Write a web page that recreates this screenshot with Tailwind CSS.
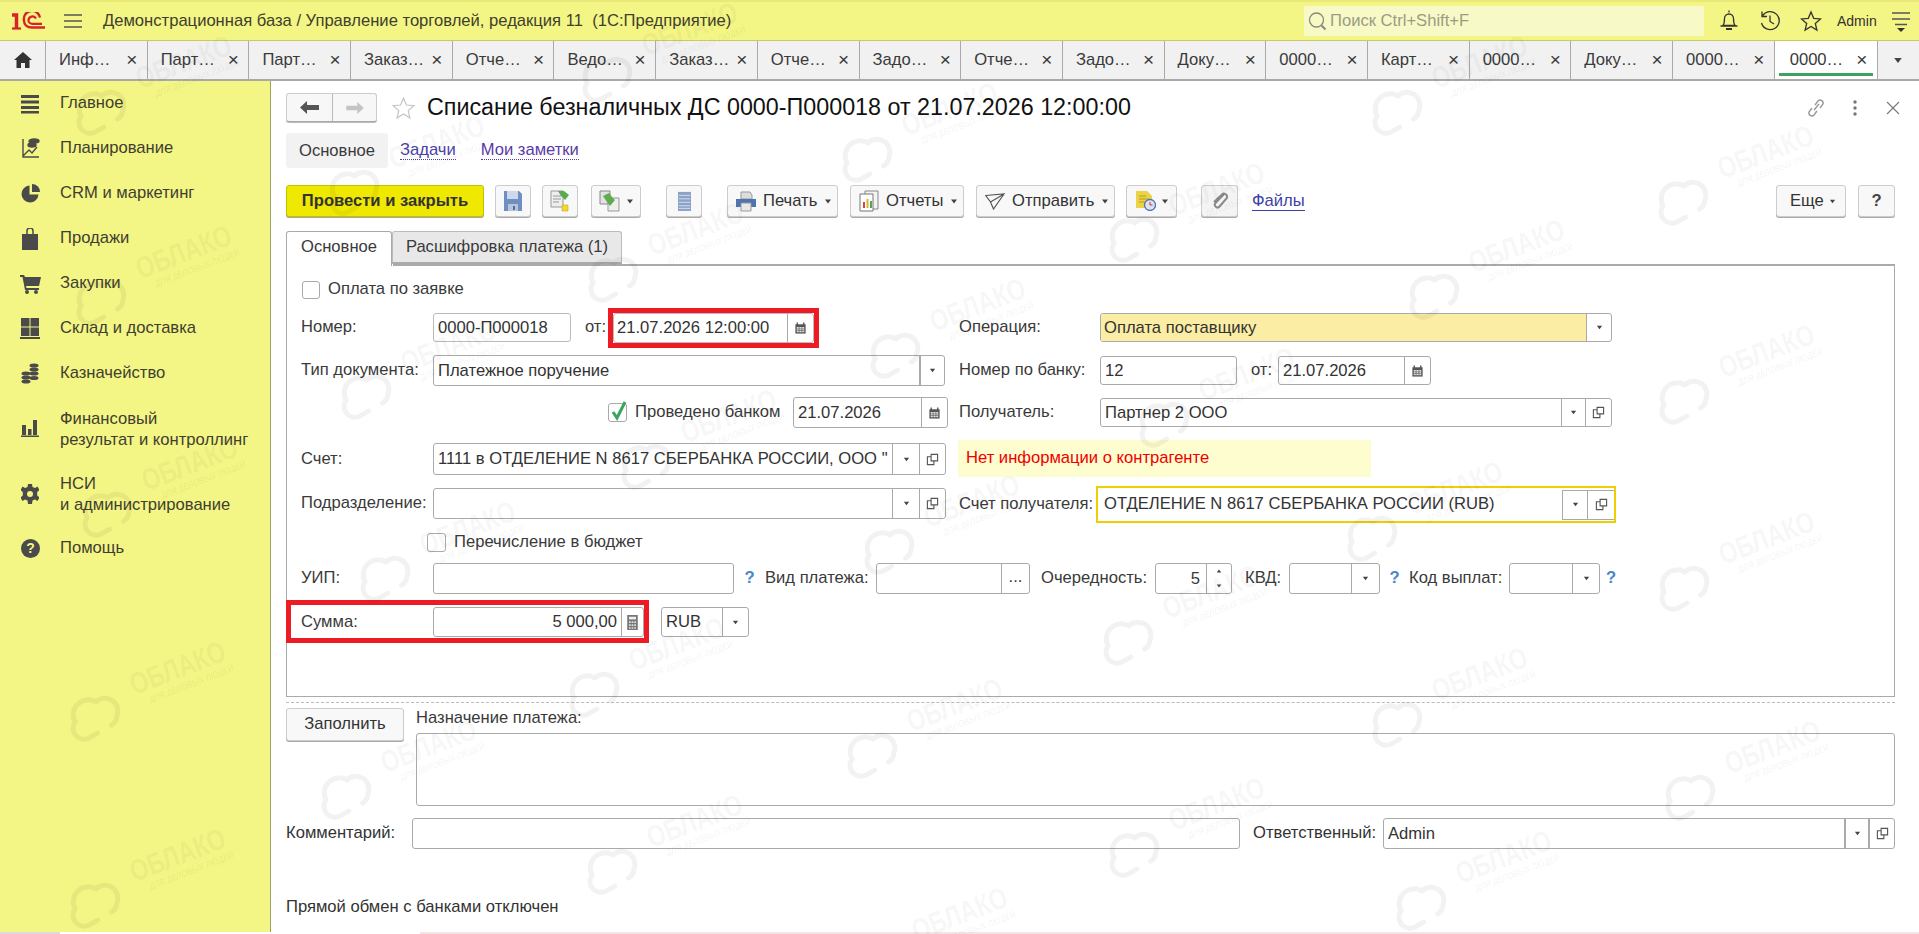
<!DOCTYPE html>
<html lang="ru"><head><meta charset="utf-8"><title>1С</title>
<script src="https://cdn.jsdelivr.net/npm/@tailwindcss/browser@4"></script></head>
<body class="m-0">
<svg width="0" height="0" class="absolute">
<defs>
<symbol id="dd" viewBox="0 0 8 5"><path d="M1 .5h6L4 4.500z" fill="#444"/></symbol>
<symbol id="cp" viewBox="0 0 14 14"><path d="M5.500 1.500h7v7h-7z M5.500 4H1.500v8.500h7V8.500" fill="none" stroke="#555" stroke-width="1.200"/></symbol>
<symbol id="cal" viewBox="0 0 14 14"><path d="M1.500 3h11v10h-11z" fill="#555"/><path d="M3.500 1v3M10.500 1v3" stroke="#555" stroke-width="1.500"/><path d="M3 6h8v5.500H3z" fill="#eee"/><path d="M3 8h8M3 9.800h8M5.500 6v5.500M8.500 6v5.500" stroke="#555" stroke-width=".7"/></symbol>
<g id="wm">
<g transform="rotate(-21)" fill="#000" fill-opacity=".05" font-family="Liberation Sans">
<text x="-50" y="9" font-size="30" font-weight="700" textLength="100" lengthAdjust="spacingAndGlyphs">ОБЛАКО</text>
<text x="-38" y="22" font-size="10" font-weight="700" font-style="italic" textLength="90" lengthAdjust="spacingAndGlyphs">ДЛЯ ДЕЛОВЫХ ЛЮДЕЙ</text>
</g>
<path transform="translate(-85 46) rotate(-30)" d="M-5 18h-9a11 11 0 0 1-5-21a15 15 0 0 1 28-7a13 13 0 0 1 11 23c-2 3-5 5-9 5" fill="none" stroke="#000" stroke-opacity=".05" stroke-width="5" stroke-linecap="round"/>
</g>
</defs>
</svg>

<div class="relative w-[1919px] h-[934px] overflow-hidden bg-white font-['Liberation_Sans',sans-serif] text-[16.600px] text-[#3a3a3a]">

<!-- header -->
<header class="h-[41px] bg-[#f3f585] border-t-[2px] border-t-[#e9e97a] border-b border-b-[#c9c96a] flex items-center">
  <svg class="ml-[11px] w-[35px] h-[18px]" viewBox="0 0 35 18" fill="none" stroke="#d8232a"><path d="M1 3h4.500v13" stroke-width="3.500"/><path d="M1 16.500h9" stroke-width="2.200"/><path d="M29 5.500A7.500 7.500 0 0 0 13 8.500c0 4 3 7 8 7h13" stroke-width="2.400"/><path d="M25 6.500a4 4 0 0 0-7.500 2c0 2 2 3.300 4 3.300H31" stroke-width="2.200"/></svg>
  <svg class="ml-[18px] w-[18px] h-[14px]" viewBox="0 0 18 14" stroke="#555" stroke-width="1.300"><path d="M0 1h18M0 7h18M0 13h18"/></svg>
  <span class="ml-[21px] w-[1201px] whitespace-pre text-[#3f3f2c]">Демонстрационная база / Управление торговлей, редакция 11  (1С:Предприятие)</span>
  <div class="w-[400px] h-[30px] bg-[#f7f9c6] rounded-[2px] flex items-center pl-[4px]">
    <svg class="w-[19px] h-[21px]" viewBox="0 0 19 21" fill="none" stroke="#8a8a78" stroke-width="1.300"><circle cx="8.500" cy="9" r="7"/><path d="M13.500 14.500l4 4" stroke-width="2"/></svg>
    <span class="ml-[3px] text-[#9c9c84]">Поиск Ctrl+Shift+F</span>
  </div>
  <svg class="ml-[15px] w-[20px] h-[24px]" viewBox="0 0 20 24" fill="none" stroke="#333" stroke-width="1.300"><path d="M10 1.500v2M4 16.500c1.500-2 1.500-4 1.500-7a4.500 4.500 0 0 1 9 0c0 3 0 5 1.500 7zM1.500 17h17"/><path d="M7 20h6" stroke-width="2"/></svg>
  <svg class="ml-[20px] w-[22px] h-[24px]" viewBox="0 0 22 24" fill="none" stroke="#333" stroke-width="1.300"><path d="M3.500 7a9 9 0 1 1-1 7M3 2.500v5h5M11 6.500v6l4 2.500"/></svg>
  <svg class="ml-[19px] w-[22px] h-[22px]" viewBox="0 0 22 22" fill="none" stroke="#333" stroke-width="1.300"><path d="M11 2l2.700 6.300 6.800.6-5.200 4.500 1.600 6.700L11 16.500 5.100 20.100l1.600-6.700L1.500 8.900l6.800-.6z"/></svg>
  <span class="ml-[15px] text-[14px] w-[54px] text-[#333]">Admin</span>
  <svg class="w-[20px] h-[22px]" viewBox="0 0 20 22" stroke="#555" stroke-width="1.300"><path d="M1 3h18M1 9h18M4 14.500h12"/><path d="M6 18h8l-4 4z" fill="#333" stroke="none"/></svg>
</header>

<!-- tabs -->
<nav class="h-[40px] bg-[#f1f1f1] border-b-[2px] border-[#a9a9a9] flex">
  <div class="w-[46px] flex items-center justify-center border-r border-[#aaa]"><svg class="w-[18px] h-[16px]" viewBox="0 0 18 16"><path d="M9 0L0 8h2.500v8H7v-5h4v5h4.500V8H18z" fill="#333"/></svg></div>
  <div class="w-[101.700px] flex items-center pl-[13px] pr-[6px] border-r border-[#aaa]"><span class="flex-1">Инф…</span><span class="w-[18px] text-center text-[19px]">×</span></div>
  <div class="w-[101.700px] flex items-center pl-[13px] pr-[6px] border-r border-[#aaa]"><span class="flex-1">Парт…</span><span class="w-[18px] text-center text-[19px]">×</span></div>
  <div class="w-[101.700px] flex items-center pl-[13px] pr-[6px] border-r border-[#aaa]"><span class="flex-1">Парт…</span><span class="w-[18px] text-center text-[19px]">×</span></div>
  <div class="w-[101.700px] flex items-center pl-[13px] pr-[6px] border-r border-[#aaa]"><span class="flex-1">Заказ…</span><span class="w-[18px] text-center text-[19px]">×</span></div>
  <div class="w-[101.700px] flex items-center pl-[13px] pr-[6px] border-r border-[#aaa]"><span class="flex-1">Отче…</span><span class="w-[18px] text-center text-[19px]">×</span></div>
  <div class="w-[101.700px] flex items-center pl-[13px] pr-[6px] border-r border-[#aaa]"><span class="flex-1">Ведо…</span><span class="w-[18px] text-center text-[19px]">×</span></div>
  <div class="w-[101.700px] flex items-center pl-[13px] pr-[6px] border-r border-[#aaa]"><span class="flex-1">Заказ…</span><span class="w-[18px] text-center text-[19px]">×</span></div>
  <div class="w-[101.700px] flex items-center pl-[13px] pr-[6px] border-r border-[#aaa]"><span class="flex-1">Отче…</span><span class="w-[18px] text-center text-[19px]">×</span></div>
  <div class="w-[101.700px] flex items-center pl-[13px] pr-[6px] border-r border-[#aaa]"><span class="flex-1">Задо…</span><span class="w-[18px] text-center text-[19px]">×</span></div>
  <div class="w-[101.700px] flex items-center pl-[13px] pr-[6px] border-r border-[#aaa]"><span class="flex-1">Отче…</span><span class="w-[18px] text-center text-[19px]">×</span></div>
  <div class="w-[101.700px] flex items-center pl-[13px] pr-[6px] border-r border-[#aaa]"><span class="flex-1">Задо…</span><span class="w-[18px] text-center text-[19px]">×</span></div>
  <div class="w-[101.700px] flex items-center pl-[13px] pr-[6px] border-r border-[#aaa]"><span class="flex-1">Доку…</span><span class="w-[18px] text-center text-[19px]">×</span></div>
  <div class="w-[101.700px] flex items-center pl-[13px] pr-[6px] border-r border-[#aaa]"><span class="flex-1">0000…</span><span class="w-[18px] text-center text-[19px]">×</span></div>
  <div class="w-[101.700px] flex items-center pl-[13px] pr-[6px] border-r border-[#aaa]"><span class="flex-1">Карт…</span><span class="w-[18px] text-center text-[19px]">×</span></div>
  <div class="w-[101.700px] flex items-center pl-[13px] pr-[6px] border-r border-[#aaa]"><span class="flex-1">0000…</span><span class="w-[18px] text-center text-[19px]">×</span></div>
  <div class="w-[101.700px] flex items-center pl-[13px] pr-[6px] border-r border-[#aaa]"><span class="flex-1">Доку…</span><span class="w-[18px] text-center text-[19px]">×</span></div>
  <div class="w-[101.700px] flex items-center pl-[13px] pr-[6px] border-r border-[#aaa]"><span class="flex-1">0000…</span><span class="w-[18px] text-center text-[19px]">×</span></div>
  <div class="relative w-[103px] flex items-center pl-[15px] pr-[6px] bg-white border-r border-[#aaa]"><span class="flex-1">0000…</span><span class="w-[18px] text-center text-[19px]">×</span><span class="absolute left-[4px] right-[4px] bottom-[3px] h-[3px] bg-[#3da35f]"></span></div>
  <div class="flex-1 flex items-center justify-center"><svg class="w-[10px] h-[7px]" viewBox="0 0 8 5"><use href="#dd"/></svg></div>
</nav>

<div class="flex h-[853px]">
<!-- sidebar -->
<aside class="w-[271px] bg-[#f3f585] border-r border-[#a0a05a] text-[#3f3f30] shrink-0">
  <div class="h-[45px] flex items-center"><svg class="ml-[20px] w-[20px] h-[20px]" viewBox="0 0 20 20" fill="#4a4a4a"><path d="M1 1h18v3H1zM1 6.500h18v3H1zM1 12h18v3H1zM1 17h18v2.500H1z"/></svg><span class="ml-[20px]">Главное</span></div>
  <div class="h-[45px] flex items-center"><svg class="ml-[20px] w-[20px] h-[22px]" viewBox="0 0 20 22" fill="none" stroke="#4a4a4a" stroke-width="1.400"><path d="M3 1v18h16M3 18l6-6 3 3 5-6"/><ellipse cx="14" cy="3" rx="5" ry="2" fill="#4a4a4a"/><ellipse cx="12" cy="7" rx="4" ry="2" fill="#4a4a4a"/></svg><span class="ml-[20px]">Планирование</span></div>
  <div class="h-[45px] flex items-center"><svg class="ml-[21px] w-[19px] h-[19px]" viewBox="0 0 19 19" fill="#4a4a4a"><path d="M8.500 1.500a8.500 8.500 0 1 0 9 9h-9z"/><path d="M11 0a8 8 0 0 1 8 8h-8z"/></svg><span class="ml-[20px]">CRM и маркетинг</span></div>
  <div class="h-[45px] flex items-center"><svg class="ml-[21px] w-[18px] h-[22px]" viewBox="0 0 18 22" fill="#4a4a4a"><path d="M1 6h16v16H1z"/><path d="M6 8V3a3 3 0 0 1 6 0v5" fill="none" stroke="#4a4a4a" stroke-width="1.500"/></svg><span class="ml-[21px]">Продажи</span></div>
  <div class="h-[45px] flex items-center"><svg class="ml-[20px] w-[21px] h-[20px]" viewBox="0 0 21 20" fill="#4a4a4a"><path d="M0 1h4l1 2h16l-2 9H6l.5 2H19v2H5L2.500 3H0z"/><circle cx="7" cy="18" r="2"/><circle cx="16" cy="18" r="2"/></svg><span class="ml-[19px]">Закупки</span></div>
  <div class="h-[45px] flex items-center"><svg class="ml-[20px] w-[20px] h-[21px]" viewBox="0 0 20 21" fill="#4a4a4a"><path d="M1 0h8.500v8.500H1zM10.500 0H19v8.500h-8.500zM1 9.500h8.500V18H1zM10.500 9.500H19V18h-8.500zM0 19h20v2H0z"/></svg><span class="ml-[20px]">Склад и доставка</span></div>
  <div class="h-[45px] flex items-center"><svg class="ml-[21px] w-[18px] h-[22px]" viewBox="0 0 18 22" fill="#4a4a4a"><ellipse cx="13" cy="2.500" rx="4.500" ry="2"/><ellipse cx="13" cy="6.500" rx="4.500" ry="2"/><ellipse cx="13" cy="10.500" rx="4.500" ry="2"/><ellipse cx="5" cy="10.500" rx="4.500" ry="2"/><ellipse cx="5" cy="14.500" rx="4.500" ry="2"/><ellipse cx="5" cy="18.500" rx="4.500" ry="2"/><ellipse cx="13" cy="15" rx="4.500" ry="2"/></svg><span class="ml-[21px]">Казначейство</span></div>
  <div class="h-[65px] flex items-center"><svg class="ml-[21px] w-[18px] h-[17px]" viewBox="0 0 18 17" fill="#4a4a4a"><path d="M1 5h4v10H1zM7 9h3.500v6H7zM12 0h4v15h-4zM0 15.500h18V17H0z"/></svg><span class="ml-[21px] leading-[21px]">Финансовый<br>результат и контроллинг</span></div>
  <div class="h-[65px] flex items-center"><svg class="ml-[21px] w-[18px] h-[20px]" viewBox="0 0 18 20"><path d="M7 0h4l.5 3 2.500 1 2.500-1.500 2 3.500-2.300 2v3.500l2.300 2-2 3.500-2.500-1.500-2.500 1-.5 3.500H7l-.5-3.500-2.500-1-2.500 1.500-2-3.500 2.300-2V8l-2.300-2 2-3.500L4 4l2.500-1z" fill="#4a4a4a"/><circle cx="9" cy="10" r="3" fill="#f3f585"/></svg><span class="ml-[21px] leading-[21px]">НСИ<br>и администрирование</span></div>
  <div class="h-[45px] flex items-center"><span class="ml-[21px] w-[19px] h-[19px] rounded-full bg-[#4a4a4a] text-[#f3f585] text-[14px] font-bold leading-[19px] text-center">?</span><span class="ml-[20px]">Помощь</span></div>
</aside>

<!-- main -->
<main class="relative flex-1 pl-[15px] pr-[24px] flex flex-col">
  <div class="mt-[12px] h-[29px] flex items-center">
    <div class="flex w-[91px] h-[29px] border border-[#ccc] border-b-[#aaa] rounded-[3px] bg-[#f7f7f7] shadow-[0_1px_0_#bbb]">
      <span class="w-[46px] flex items-center justify-center border-r border-[#bbb]"><svg class="w-[19px] h-[13px]" viewBox="0 0 19 13" fill="#555"><path d="M0 6.500L7 0v4h12v5H7v4z"/></svg></span>
      <span class="flex-1 flex items-center justify-center"><svg class="w-[18px] h-[12px]" viewBox="0 0 19 13" fill="#c4c4c4"><path d="M19 6.500L12 0v4H0v5h12v4z"/></svg></span>
    </div>
    <svg class="ml-[14px] w-[25px] h-[24px]" viewBox="0 0 22 22" fill="none" stroke="#c4c4c4" stroke-width="1.100"><path d="M11 2l2.700 6.300 6.800.6-5.200 4.500 1.600 6.700L11 16.500 5.100 20.100l1.600-6.700L1.500 8.900l6.800-.6z"/></svg>
    <h1 class="ml-[11px] text-[23.300px] text-[#111] font-normal whitespace-nowrap">Списание безналичных ДС 0000-П000018 от 21.07.2026 12:00:00</h1>
    <div class="ml-auto flex items-center">
      <svg class="w-[20px] h-[22px]" viewBox="0 0 20 22" fill="none" stroke="#999" stroke-width="1.400"><path d="M8 13l5-6M6 11l-3 4a3 3 0 0 0 5 3l3-4M9 8l3-4a3 3 0 0 1 5 3l-3 4"/></svg>
      <svg class="ml-[27px] w-[4px] h-[16px]" viewBox="0 0 4 16" fill="#777"><circle cx="2" cy="2" r="1.700"/><circle cx="2" cy="8" r="1.700"/><circle cx="2" cy="14" r="1.700"/></svg>
      <svg class="ml-[29px] mr-[-5px] w-[14px] h-[14px]" viewBox="0 0 14 14" stroke="#777" stroke-width="1.100"><path d="M1 1l12 12M13 1L1 13"/></svg>
    </div>
  </div>

  <div class="mt-[11px] h-[35px] flex items-center">
    <span class="w-[102px] h-[35px] rounded-[3px] bg-[#f2f2f2] text-center leading-[35px]">Основное</span>
    <a class="ml-[12px] text-[#4a43a8] border-b border-dotted border-[#4a43a8] leading-[18px]">Задачи</a>
    <a class="ml-[25px] text-[#5a3aa8] border-b border-dotted border-[#5a3aa8] leading-[18px]">Мои заметки</a>
  </div>

  <!-- toolbar -->
  <div class="mt-[17px] h-[32px] flex items-center">
    <button class="w-[198px] h-[32px] rounded-[3px] border border-[#c4c000] bg-[#efe800] shadow-[0_1px_0_#a5a5a5] font-bold text-[#333]">Провести и закрыть</button>
    <button class="ml-[11px] w-[36px] h-[32px] flex items-center justify-center rounded-[3px] border border-[#ccc] bg-[#f8f8f8] shadow-[0_1px_0_#aaa]"><svg class="w-[18px] h-[20px]" viewBox="0 0 18 20"><path d="M0 0h15l3 3v17H0z" fill="#6e8fc2"/><path d="M3 0h11v8H3z" fill="#cfd8ea"/><path d="M4 13h10v7H4z" fill="#b7c4dc"/><path d="M9 15h2v4H9z" fill="#55709d"/></svg></button>
    <button class="ml-[11px] w-[36px] h-[32px] flex items-center justify-center rounded-[3px] border border-[#ccc] bg-[#f8f8f8] shadow-[0_1px_0_#aaa]"><svg class="w-[20px] h-[22px]" viewBox="0 0 20 22"><path d="M1 1h12v16H1z" fill="#eee" stroke="#999"/><path d="M3 6h8M3 9h8M3 12h6" stroke="#999"/><path d="M8 1h6l5 4-4 5-2-2-2-2z" fill="#5aaa52"/><path d="M12 15h6v6h-6z" fill="#f1d92e" stroke="#b69d10" stroke-width=".5"/></svg></button>
    <button class="ml-[13px] w-[50px] h-[32px] flex items-center pl-[7px] rounded-[3px] border border-[#ccc] bg-[#f8f8f8] shadow-[0_1px_0_#aaa]"><svg class="w-[21px] h-[22px]" viewBox="0 0 21 22"><path d="M1 1h10v13H1z" fill="#e2e2e2" stroke="#888"/><path d="M9 8h11v13H9z" fill="#eee" stroke="#999"/><path d="M4 6l6-3 3 4 3 3-5 6-3-4z" fill="#62ab4d"/></svg><svg class="ml-[6px] w-[8px] h-[5px]"><use href="#dd"/></svg></button>
    <button class="ml-[25px] w-[36px] h-[32px] flex items-center justify-center rounded-[3px] border border-[#ccc] bg-[#f8f8f8] shadow-[0_1px_0_#aaa]"><svg class="w-[13px] h-[22px]" viewBox="0 0 15 23"><path d="M0 1h15v22H0z" fill="#8ba3c7"/><path d="M1 5h13M1 9h13M1 13h13M1 17h13M1 20h13" stroke="#dfe6f0"/></svg></button>
    <button class="ml-[25px] w-[111px] h-[32px] flex items-center pl-[8px] rounded-[3px] border border-[#ccc] bg-[#f8f8f8] shadow-[0_1px_0_#aaa]"><svg class="w-[20px] h-[21px]" viewBox="0 0 20 21"><path d="M5 1h9l2 3v4H5z" fill="#ddd" stroke="#999"/><path d="M0 8h20v8H0z" fill="#4d74ad"/><path d="M5 12h10v8H5z" fill="#e8e8e8" stroke="#999"/></svg><span class="ml-[7px] text-[#333]">Печать</span><svg class="ml-[7px] w-[8px] h-[5px]"><use href="#dd"/></svg></button>
    <button class="ml-[12px] w-[114px] h-[32px] flex items-center pl-[8px] rounded-[3px] border border-[#ccc] bg-[#f8f8f8] shadow-[0_1px_0_#aaa]"><svg class="w-[20px] h-[22px]" viewBox="0 0 20 22"><path d="M6 1h13v18H6z" fill="#f4f4f4" stroke="#888"/><path d="M1 4h13v17H1z" fill="#fff" stroke="#777"/><path d="M4 12h2v6H4z" fill="#d0483f"/><path d="M7.500 9h2v9h-2z" fill="#e0b030"/><path d="M11 11h2v7h-2z" fill="#52a55c"/></svg><span class="ml-[7px] text-[#333]">Отчеты</span><svg class="ml-[7px] w-[8px] h-[5px]"><use href="#dd"/></svg></button>
    <button class="ml-[12px] w-[139px] h-[32px] flex items-center pl-[8px] rounded-[3px] border border-[#ccc] bg-[#f8f8f8] shadow-[0_1px_0_#aaa]"><svg class="w-[20px] h-[17px]" viewBox="0 0 20 17" fill="none" stroke="#555" stroke-width="1.200"><path d="M.7 2.500L19 1 8.500 16 5.500 9zM5.500 9L19 1"/></svg><span class="ml-[7px] text-[#333]">Отправить</span><svg class="ml-[7px] w-[8px] h-[5px]"><use href="#dd"/></svg></button>
    <button class="ml-[11px] w-[51px] h-[32px] flex items-center pl-[9px] rounded-[3px] border border-[#ccc] bg-[#f8f8f8] shadow-[0_1px_0_#aaa]"><svg class="w-[20px] h-[20px]" viewBox="0 0 20 20"><path d="M0 0h11l5 5v12H0z" fill="#ecd247"/><path d="M3 5h7M3 8h10M3 11h8" stroke="#b99c1e"/><circle cx="14" cy="14" r="5.500" fill="#dbe3f2" stroke="#4d74ad" stroke-width="1.300"/><path d="M14 11v3h2.500" stroke="#c33" fill="none"/></svg><svg class="ml-[5px] w-[8px] h-[5px]"><use href="#dd"/></svg></button>
    <button class="ml-[24px] w-[37px] h-[32px] flex items-center justify-center rounded-[3px] border border-[#ccc] bg-[#f4f4f4] shadow-[0_1px_0_#aaa]"><svg class="w-[16px] h-[18px]" viewBox="0 0 16 18" fill="none" stroke="#8a8a8a" stroke-width="2"><path d="M12 2L3.500 11a2.500 2.500 0 0 0 4 3.500L14 7a3 3 0 0 0-4-4.500L2 10"/></svg></button>
    <a class="ml-[14px] text-[#3f3fa8] border-b border-[#3f3fa8] leading-[18px]">Файлы</a>
    <button class="ml-auto w-[70px] h-[32px] flex items-center pl-[13px] rounded-[3px] border border-[#ccc] bg-[#f8f8f8] shadow-[0_1px_0_#aaa] text-[#333]">Еще<svg class="ml-[5px] w-[7px] h-[5px]"><use href="#dd"/></svg></button>
    <button class="ml-[12px] w-[37px] h-[32px] rounded-[3px] border border-[#ccc] bg-[#f8f8f8] shadow-[0_1px_0_#aaa] font-bold text-[#444]">?</button>
  </div>

  <!-- form tabs -->
  <div class="mt-[14px] h-[33px] flex items-start">
    <span class="relative z-10 w-[106px] h-[35px] border border-[#aaa] border-b-0 bg-white rounded-t-[3px] text-center leading-[29px]">Основное</span>
    <span class="w-[230px] h-[33px] border border-[#bbb] bg-[#e8e8e8] rounded-t-[3px] text-center leading-[29px] border-b-[2px] border-b-[#aaa]">Расшифровка платежа (1)</span>
  </div>

  <!-- panel -->
  <section class="h-[433px] border border-[#aaa] border-t-0 pl-[14px]">
    <div class="h-[2px] mr-[-1px] ml-[92px] bg-[#aaa]"></div>
    <div class="mt-[15px] h-[18px] flex items-center"><span class="w-[18px] h-[18px] ml-[1px] border border-[#aaa] rounded-[3px] bg-white"></span><span class="ml-[8px] -translate-y-px">Оплата по заявке</span></div>
    <div class="mt-[14px] flex">
      <!-- left column -->
      <div class="w-[658px]">
        <div class="h-[29px] flex items-center">
          <span class="w-[132px]">Номер:</span>
          <div class="w-[138px] h-[29px] border border-[#bbb] rounded-[3px] bg-white px-[4px] leading-[27px] text-[#333]">0000-П000018</div>
          <span class="ml-[14px] w-[28px]">от:</span>
          <div class="relative w-[201px] h-[30px] flex border border-[#bbb] rounded-[3px] bg-white text-[#333]">
            <span class="flex-1 px-[3px] leading-[28px] whitespace-nowrap">21.07.2026 12:00:00</span>
            <span class="w-[26px] flex items-center justify-center border-l border-[#aaa]"><svg class="w-[13px] h-[14px]"><use href="#cal"/></svg></span>
            <span class="absolute -inset-[6px] border-[5px] border-[#ed1c24]"></span>
          </div>
        </div>
        <div class="mt-[13px] h-[31px] flex items-center">
          <span class="w-[132px]">Тип документа:</span>
          <div class="w-[512px] h-[31px] flex border border-[#aaa] rounded-[3px] bg-white text-[#333]"><span class="flex-1 px-[4px] leading-[29px]">Платежное поручение</span><span class="w-[25px] flex items-center justify-center border-l-[2px] border-[#aaa]"><svg class="w-[7px] h-[5px]"><use href="#dd"/></svg></span></div>
        </div>
        <div class="mt-[11px] h-[31px] flex items-center pl-[307px]">
          <span class="w-[19px] h-[19px] relative border border-[#aaa] rounded-[3px] bg-white"><svg class="absolute left-[1px] top-[-4px] w-[18px] h-[21px]" viewBox="0 0 18 21" fill="none" stroke="#3da35f" stroke-width="3"><path d="M3 12l4 6L15 2"/></svg></span>
          <span class="ml-[8px] w-[158px]">Проведено банком</span>
          <div class="w-[155px] h-[31px] flex border border-[#aaa] rounded-[3px] bg-white text-[#333]"><span class="flex-1 px-[4px] leading-[29px]">21.07.2026</span><span class="w-[26px] flex items-center justify-center border-l border-[#aaa]"><svg class="w-[13px] h-[14px]"><use href="#cal"/></svg></span></div>
        </div>
        <div class="mt-[15px] h-[32px] flex items-center">
          <span class="w-[132px]">Счет:</span>
          <div class="w-[513px] h-[32px] flex border border-[#aaa] rounded-[3px] bg-white text-[#333]"><span class="flex-1 min-w-0 pl-[4px] pr-[2px] leading-[30px] whitespace-nowrap overflow-hidden">1111 в ОТДЕЛЕНИЕ N 8617 СБЕРБАНКА РОССИИ, ООО "</span><span class="w-[28px] flex items-center justify-center border-x border-[#aaa]"><svg class="w-[7px] h-[5px]"><use href="#dd"/></svg></span><span class="w-[25px] flex items-center justify-center"><svg class="w-[13px] h-[13px]"><use href="#cp"/></svg></span></div>
        </div>
        <div class="mt-[13px] h-[31px] flex items-center">
          <span class="w-[132px]">Подразделение:</span>
          <div class="w-[513px] h-[31px] flex border border-[#aaa] rounded-[3px] bg-white"><span class="flex-1"></span><span class="w-[28px] flex items-center justify-center border-x border-[#aaa]"><svg class="w-[7px] h-[5px]"><use href="#dd"/></svg></span><span class="w-[25px] flex items-center justify-center"><svg class="w-[13px] h-[13px]"><use href="#cp"/></svg></span></div>
        </div>
      </div>
      <!-- right column -->
      <div>
        <div class="h-[29px] flex items-center">
          <span class="w-[141px]">Операция:</span>
          <div class="w-[512px] h-[29px] flex border border-[#aaa] rounded-[3px] bg-white text-[#333]"><span class="flex-1 px-[3px] leading-[27px] bg-[#fbeda3] rounded-l-[3px]">Оплата поставщику</span><span class="w-[25px] flex items-center justify-center border-l border-[#aaa]"><svg class="w-[7px] h-[5px]"><use href="#dd"/></svg></span></div>
        </div>
        <div class="mt-[14px] h-[29px] flex items-center">
          <span class="w-[141px]">Номер по банку:</span>
          <div class="w-[137px] h-[29px] border border-[#aaa] rounded-[3px] bg-white px-[4px] leading-[27px] text-[#333]">12</div>
          <span class="ml-[14px] w-[27px]">от:</span>
          <div class="w-[153px] h-[29px] flex border border-[#aaa] rounded-[3px] bg-white text-[#333]"><span class="flex-1 px-[4px] leading-[27px]">21.07.2026</span><span class="w-[26px] flex items-center justify-center border-l border-[#aaa]"><svg class="w-[13px] h-[14px]"><use href="#cal"/></svg></span></div>
        </div>
        <div class="mt-[13px] h-[29px] flex items-center">
          <span class="w-[141px]">Получатель:</span>
          <div class="w-[512px] h-[29px] flex border border-[#aaa] rounded-[3px] bg-white text-[#333]"><span class="flex-1 px-[4px] leading-[27px]">Партнер 2 ООО</span><span class="w-[25px] flex items-center justify-center border-x border-[#aaa]"><svg class="w-[7px] h-[5px]"><use href="#dd"/></svg></span><span class="w-[25px] flex items-center justify-center"><svg class="w-[13px] h-[13px]"><use href="#cp"/></svg></span></div>
        </div>
        <div class="mt-[13px] w-[413px] h-[37px] ml-[-1px] pl-[8px] bg-[#fdfdcf] text-[#f00000] leading-[35px]">Нет информации о контрагенте</div>
        <div class="mt-[9px] h-[37px] flex items-center">
          <span class="w-[137px] whitespace-nowrap">Счет получателя:</span>
          <div class="w-[520px] h-[37px] flex items-center border-[2px] border-[#efcf00] bg-white pl-[6px] text-[#333]"><span class="flex-1">ОТДЕЛЕНИЕ N 8617 СБЕРБАНКА РОССИИ (RUB)</span><span class="w-[26px] h-[30px] flex items-center justify-center border-x border-y border-[#aaa]"><svg class="w-[7px] h-[5px]"><use href="#dd"/></svg></span><span class="w-[26px] h-[30px] flex items-center justify-center border-y border-[#aaa]"><svg class="w-[13px] h-[13px]"><use href="#cp"/></svg></span></div>
        </div>
      </div>
    </div>
    <div class="mt-[10px] h-[18px] flex items-center pl-[126px]"><span class="w-[19px] h-[19px] border border-[#aaa] rounded-[3px] bg-white"></span><span class="ml-[8px]">Перечисление в бюджет</span></div>
    <div class="mt-[12px] h-[31px] flex items-center">
      <span class="w-[132px]">УИП:</span>
      <div class="w-[301px] h-[31px] border border-[#aaa] rounded-[3px] bg-white"></div>
      <span class="w-[31px] text-center font-bold text-[#4a86c8]">?</span>
      <span class="w-[111px] whitespace-nowrap">Вид платежа:</span>
      <div class="w-[154px] h-[31px] flex border border-[#aaa] rounded-[3px] bg-white"><span class="flex-1"></span><span class="w-[28px] border-l border-[#aaa] text-center leading-[26px]">...</span></div>
      <span class="ml-[11px] w-[114px]">Очередность:</span>
      <div class="w-[77px] h-[31px] flex border border-[#aaa] rounded-[3px] bg-white"><span class="flex-1 text-right pr-[6px] leading-[29px]">5</span><span class="w-[25px] flex flex-col items-center justify-around border-l border-[#aaa]"><svg class="w-[6px] h-[4px] rotate-180"><use href="#dd"/></svg><svg class="w-[6px] h-[4px]"><use href="#dd"/></svg></span></div>
      <span class="ml-[13px] w-[44px]">КВД:</span>
      <div class="w-[91px] h-[31px] flex border border-[#aaa] rounded-[3px] bg-white"><span class="flex-1"></span><span class="w-[28px] flex items-center justify-center border-l border-[#aaa]"><svg class="w-[7px] h-[5px]"><use href="#dd"/></svg></span></div>
      <span class="w-[29px] text-center font-bold text-[#4a86c8]">?</span>
      <span class="w-[100px] whitespace-nowrap">Код выплат:</span>
      <div class="w-[91px] h-[31px] flex border border-[#aaa] rounded-[3px] bg-white"><span class="flex-1"></span><span class="w-[27px] flex items-center justify-center border-l border-[#aaa]"><svg class="w-[7px] h-[5px]"><use href="#dd"/></svg></span></div>
      <span class="w-[22px] text-center font-bold text-[#4a86c8]">?</span>
    </div>
    <div class="mt-[13px] h-[30px] flex items-center">
      <div class="relative flex items-center">
        <span class="w-[132px]">Сумма:</span>
        <div class="w-[211px] h-[30px] flex border border-[#aaa] rounded-[3px] bg-white text-[#333]"><span class="flex-1 text-right pr-[4px] leading-[28px]">5 000,00</span><span class="w-[22px] flex items-center justify-center border-l border-[#aaa]"><svg class="w-[11px] h-[15px]" viewBox="0 0 12 17"><path d="M0 0h12v17H0z" fill="#777"/><path d="M2 2h8v3H2z" fill="#eee"/><path d="M2 7h2v2H2zM5 7h2v2H5zM8 7h2v2H8zM2 10.500h2v2H2zM5 10.500h2v2H5zM8 10.500h2v2H8zM2 14h2v1.500H2zM5 14h2v1.500H5zM8 14h2v1.500H8z" fill="#ddd"/></svg></span></div>
        <span class="absolute left-[-15px] right-[-5px] top-[-7px] bottom-[-6px] border-[5px] border-[#ed1c24]"></span>
      </div>
      <div class="ml-[17px] w-[88px] h-[30px] flex border border-[#aaa] rounded-[3px] bg-white text-[#333]"><span class="flex-1 px-[4px] leading-[28px]">RUB</span><span class="w-[26px] flex items-center justify-center border-l border-[#aaa]"><svg class="w-[7px] h-[5px]"><use href="#dd"/></svg></span></div>
    </div>
  </section>

  <div class="mt-[5px] border-t border-dashed border-[#bbb]"></div>

  <div class="mt-[5px] h-[98px] flex">
    <button class="w-[118px] h-[33px] rounded-[3px] border border-[#ccc] bg-[#f8f8f8] shadow-[0_1px_0_#aaa] text-[#333]">Заполнить</button>
    <div class="ml-[12px] flex-1 flex flex-col">
      <span class="h-[25px] leading-[20px]">Назначение платежа:</span>
      <div class="flex-1 border border-[#aaa] rounded-[3px] bg-white"></div>
    </div>
  </div>

  <div class="mt-[12px] h-[31px] flex items-center">
    <span class="w-[126px] text-[#333]">Комментарий:</span>
    <div class="w-[828px] h-[31px] border border-[#aaa] rounded-[3px] bg-white"></div>
    <span class="ml-[13px] w-[130px] text-[#333] whitespace-nowrap">Ответственный:</span>
    <div class="flex-1 h-[31px] flex border border-[#aaa] rounded-[3px] bg-white text-[#333]"><span class="flex-1 px-[4px] leading-[29px]">Admin</span><span class="w-[26px] flex items-center justify-center border-x-[2px] border-[#aaa]"><svg class="w-[7px] h-[5px]"><use href="#dd"/></svg></span><span class="w-[24px] flex items-center justify-center"><svg class="w-[13px] h-[13px]"><use href="#cp"/></svg></span></div>
  </div>

  <div class="mt-[47px] h-[22px] leading-[22px] text-[#333]">Прямой обмен с банками отключен</div>
</main>
</div>

<!-- strip at the very bottom edge -->
<div class="absolute left-0 right-0 bottom-0 h-[2px] flex">
  <span class="w-[60px] bg-[#dcdcdc]"></span><span class="w-[360px] bg-white"></span><span class="flex-1 bg-[#f6e4e4]"></span>
</div>

<svg class="absolute inset-0 pointer-events-none" width="1919" height="934">
<use href="#wm" x="184" y="63"/><use href="#wm" x="184" y="253"/><use href="#wm" x="190" y="465"/><use href="#wm" x="178" y="669"/><use href="#wm" x="178" y="856"/>
<use href="#wm" x="437" y="143"/><use href="#wm" x="449" y="347"/><use href="#wm" x="468" y="529"/><use href="#wm" x="429" y="747"/>
<use href="#wm" x="690" y="30"/><use href="#wm" x="696" y="230"/><use href="#wm" x="729" y="417"/><use href="#wm" x="677" y="645"/><use href="#wm" x="695" y="822"/>
<use href="#wm" x="950" y="110"/><use href="#wm" x="978" y="306"/><use href="#wm" x="972" y="502"/><use href="#wm" x="955" y="706"/><use href="#wm" x="960" y="915"/>
<use href="#wm" x="1217" y="190"/><use href="#wm" x="1247" y="375"/><use href="#wm" x="1211" y="593"/><use href="#wm" x="1217" y="805"/>
<use href="#wm" x="1480" y="63"/><use href="#wm" x="1517" y="247"/><use href="#wm" x="1455" y="489"/><use href="#wm" x="1480" y="675"/><use href="#wm" x="1504" y="858"/>
<use href="#wm" x="1766" y="153"/><use href="#wm" x="1767" y="352"/><use href="#wm" x="1767" y="539"/><use href="#wm" x="1773" y="748"/>
<use href="#wm" x="2030" y="60"/><use href="#wm" x="2030" y="260"/><use href="#wm" x="2030" y="470"/><use href="#wm" x="2030" y="670"/>
</svg>
</div>
</body></html>
